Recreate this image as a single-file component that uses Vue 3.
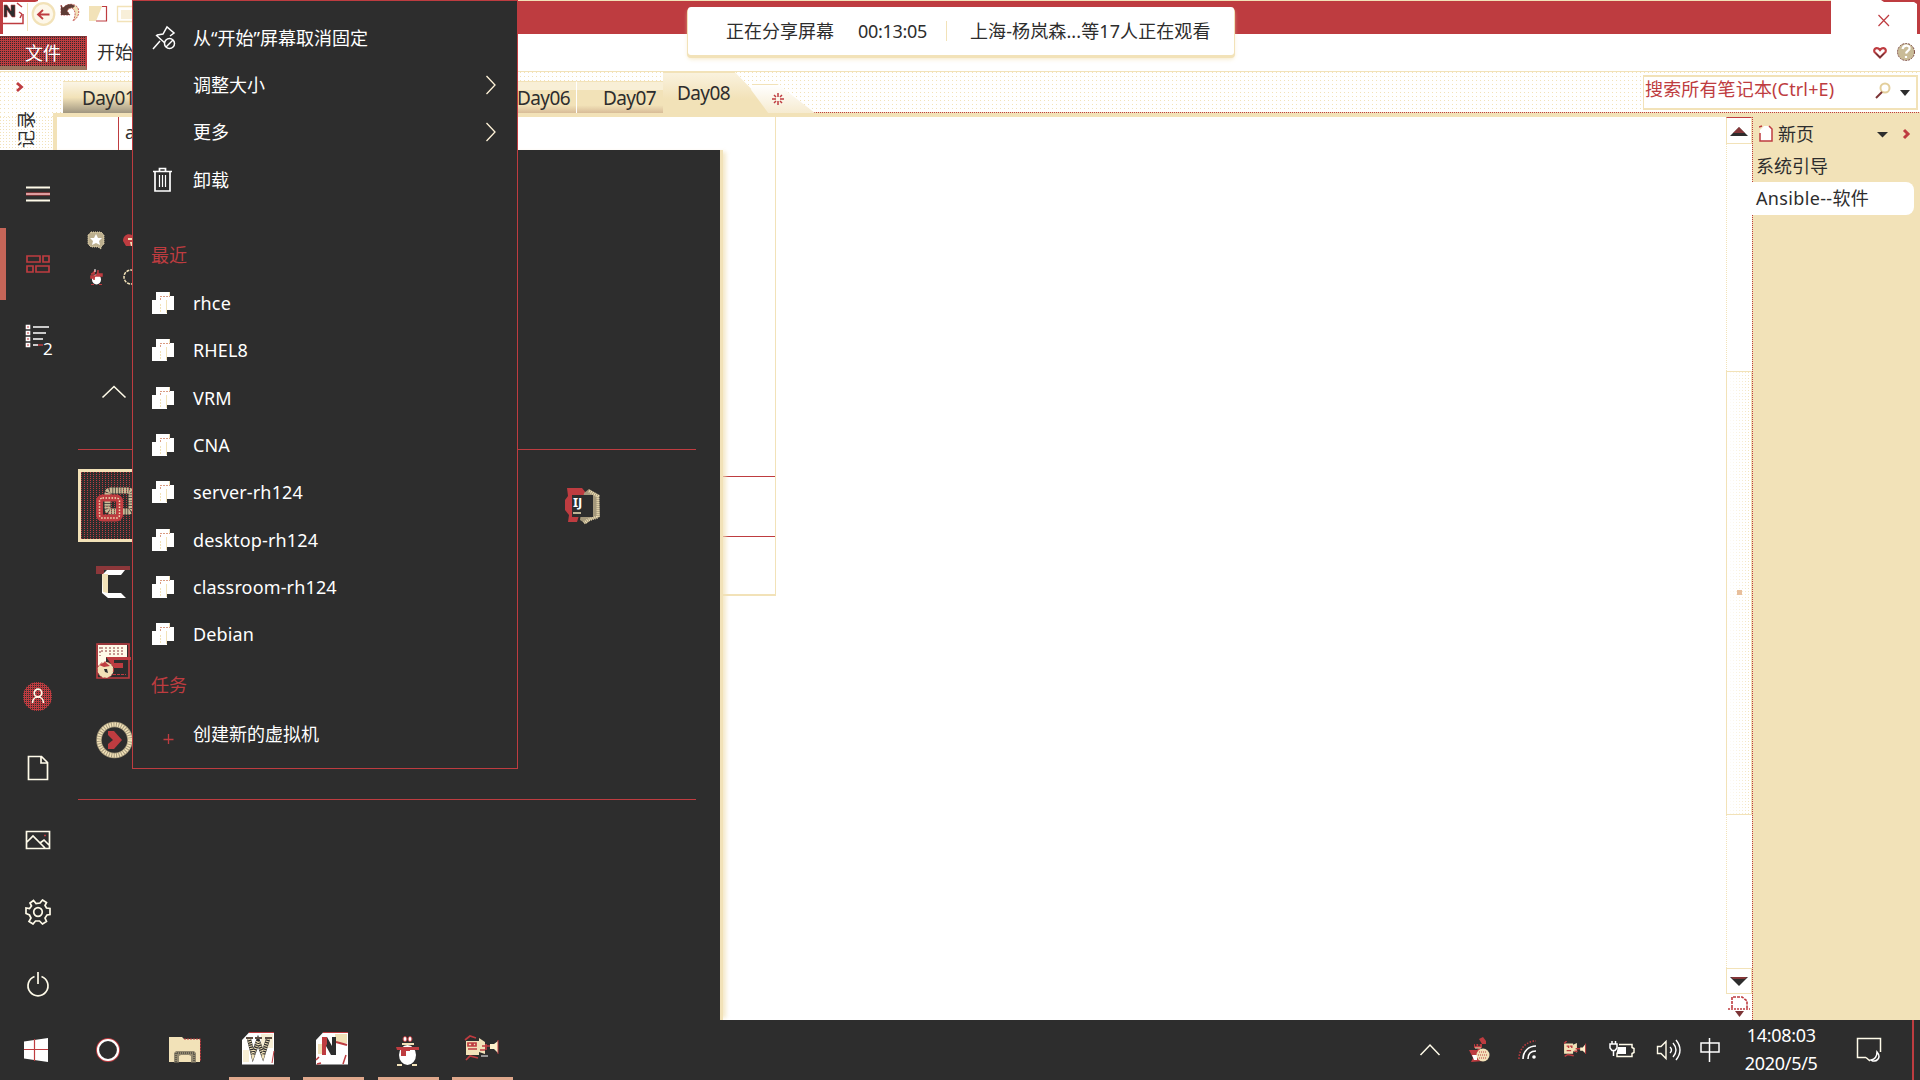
<script setup>
const recent = ['rhce', 'RHEL8', 'VRM', 'CNA', 'server-rh124', 'desktop-rh124', 'classroom-rh124', 'Debian']
</script>

<template>
  <div class="desktop">
    <!-- Notebook window -->
    <main class="window">
      <header class="title">
        <div class="quick">
          <svg width="136" height="34" viewBox="3 0 136 34">
            <path d="M3 0h35v1l-3 1H3z" fill="#be3c40" />
            <path d="M3 23.500h20V14" stroke="#be3c40" fill="none" stroke-width="1.500" />
            <path d="M17 3l5 4M19 12l3 2M20 18l2-4" stroke="#be3c40" fill="none" stroke-width="1.500" />
            <path d="M4 17V5h3l4 6V5h4v12h-3L7 10v7z" fill="#2d2d2d" stroke="#be3c40" stroke-width=".6" />
            <path d="M27.500 3v28" stroke="#f2e2b8" />
            <circle cx="43.500" cy="14" r="10.800" stroke="#f2e2b8" stroke-width="2.200" fill="#fdf7e9" />
            <path d="M49.500 14.500H38.500M43 10l-5 4.500 5 4.500" stroke="#be3c40" fill="none" stroke-width="1.800" />
            <path d="M61 5l2 3c4-5 12-5 15 0 2 5 0 10-5 13 2-4 3-8 1-11-2-3-5-2-7 1l3 4h-9z" fill="#f2e2b8" stroke="#be3c40" stroke-width=".8" stroke-dasharray="2 1" />
            <path d="M61 5l2 3c3-4 8-5 12-2l-2 2c-2-1-5 0-6 3l3 4h-9z" fill="#5f3c36" />
            <path d="M89 6h13v15H89z" fill="#f2e2b8" />
            <path d="M102 6.500h4.500V21H96" stroke="#be3c40" fill="#fff" stroke-width="1.200" />
            <path d="M139 6.500h-21.500v15H139" stroke="#f2e2b8" fill="none" stroke-width="1.300" />
            <path d="M121 10h11v9h-11z" fill="#f8efd9" />
          </svg>
        </div>
        <div class="title-fill"></div>
        <div class="controls">
          <svg width="89" height="34" viewBox="0 0 89 34">
            <path d="M50 0h39v34h-3V4l-3-2H53z" fill="#be3c40" />
            <path d="M47.500 15l10.500 11M58 15L47.500 26" stroke="#be3c40" stroke-width="1.200" />
          </svg>
        </div>
      </header>

      <div class="ribbon">
        <div class="file">文件</div>
        <div class="home">开始</div>
        <svg class="helps" width="48" height="36" viewBox="0 0 48 36">
          <path d="M8 21.500L2.500 16c-1.500-4 3-5 5.500-2 2.500-3 7-2 5.500 2z" fill="#fff" stroke="#be3c40" stroke-width="2.200" />
          <path d="M4 17.500l4 4 4-4" stroke="#2d2d2d" fill="none" />
          <circle cx="34" cy="16" r="8.500" fill="#c9bb97" stroke="#7c4a42" stroke-dasharray="2 1" />
          <path d="M30.500 13c1-5 8-4 7 0-1 2-3 2-3.500 4.500M34 20v2" stroke="#fff" stroke-width="2.200" fill="none" />
        </svg>
      </div>

      <div class="tabs">
        <svg class="expand" width="10" height="12" viewBox="0 0 10 12"><path d="M1 2l4.500 4L1 10" stroke="#be3c40" stroke-width="2.800" fill="none" /></svg>
        <div class="tab first">Day01</div>
        <div class="tab six">Day06</div>
        <div class="tab seven">Day07</div>
        <div class="tab active"><span>Day08</span></div>
        <div class="tab add">
          <svg width="14" height="14" viewBox="-7 -7 14 14"><path d="M0-6v4M0 2v4M-6 0h4M2 0h4M-4-4l2 2M2 2l2 2M4-4L2-2M-2 2l-2 2" stroke="#be3c40" stroke-width="1.500" /></svg>
        </div>
        <div class="search">
          <span>搜索所有笔记本(Ctrl+E)</span>
          <svg width="38" height="18" viewBox="0 0 38 18">
            <circle cx="13" cy="6" r="4.500" stroke="#e3cf9c" stroke-width="2" fill="#fff" />
            <path d="M10 10l-6 6" stroke="#7c3436" stroke-width="2" />
            <path d="M28 8h10l-5 6z" fill="#2d2d2d" />
          </svg>
        </div>
      </div>

      <div class="body">
        <aside class="notebooks"><span>记录</span></aside>
        <section class="page">
          <div class="note">
            <div class="cell"><span>a</span></div>
            <div class="row r1"></div>
            <div class="row r2"></div>
          </div>
        </section>
        <div class="scroll">
          <div class="btn"><svg width="18" height="9" viewBox="0 0 18 9"><path d="M0 9L9 0l9 9z" fill="#2d2d2d" /><path d="M3 6l6-6 6 6z" fill="#be3c40" opacity=".6" /></svg></div>
          <div class="track up"></div>
          <div class="thumb"><i></i></div>
          <div class="track down"></div>
          <div class="btn low"><svg width="18" height="9" viewBox="0 0 18 9"><path d="M0 0h18L9 9z" fill="#2d2d2d" /><path d="M1 0h16l-2 2H3z" fill="#be3c40" opacity=".6" /></svg></div>
          <svg class="pagedown" width="26" height="26" viewBox="0 0 26 26">
            <path d="M6 14V3h10l5 4v7" stroke="#be3c40" stroke-width="1.600" stroke-dasharray="3 1" fill="#fff" />
            <path d="M2 15h22" stroke="#be3c40" stroke-width="1.500" stroke-dasharray="2 1" />
            <path d="M9 17h9l-4.500 6z" fill="#7c3436" />
          </svg>
        </div>
        <aside class="pages">
          <div class="pg new">
            <svg width="14" height="18" viewBox="0 0 14 18"><path d="M1 5l4-4h5l3 3v12H1z" fill="#fff" /><path d="M1 8v8h12V4l-3-3M0 2l3-1" stroke="#be3c40" stroke-width="1.500" fill="none" /></svg>
            <span>新页</span>
            <svg class="newctl" width="34" height="12" viewBox="0 0 34 12"><path d="M0 4h11l-5.500 5.500z" fill="#2d2d2d" /><path d="M27 2l4 4-4 4" stroke="#be3c40" stroke-width="3" fill="none" /></svg>
          </div>
          <div class="pg">系统引导</div>
          <div class="pg sel">Ansible--软件</div>
        </aside>
      </div>
    </main>

    <!-- Start menu -->
    <section class="start">
      <nav class="rail">
        <div class="ri burger"><svg width="24" height="16" viewBox="0 0 24 16"><path d="M0 1.500h24M0 14.500h24" stroke="#fffbe9" stroke-width="2" /><path d="M0 8h24" stroke="#be3c40" stroke-width="3" /><path d="M0 8h24" stroke="#fff" /></svg></div>
        <div class="ri on"><svg width="24" height="18" viewBox="0 0 24 18"><path d="M1 1h13v6H1zM17 1h6v6h-6zM1 11h6v6H1zM10 11h13v6H10z" stroke="#be3c40" stroke-width="1.700" fill="none" /></svg></div>
        <div class="ri">
          <svg class="list" width="32" height="36" viewBox="0 0 32 36">
            <path d="M1.500 1.500h3v3h-3zM1.500 7.500h3v3h-3zM1.500 13.500h3v3h-3zM1.500 19.500h3v3h-3z" stroke="#fff" stroke-width="1.600" fill="#be3c40" />
            <path d="M8 3h16M8 9h13M8 15h10M8 21h5" stroke="#fff" stroke-width="1.600" /><path d="M13 21h5" stroke="#be3c40" stroke-width="1.500" />
            <text x="18" y="30.500" font-size="17" fill="#fff">2</text>
          </svg>
        </div>
        <div class="gap"></div>
        <div class="ri"><div class="user"><svg width="14" height="16" viewBox="0 0 14 16"><circle cx="7" cy="5" r="3.800" /><path d="M1.500 15c0-8 11-8 11 0" /></svg></div></div>
        <div class="ri"><svg class="ln" width="22" height="26" viewBox="0 0 22 26"><path d="M1.500 1.500h13l6 6v17h-19zM14 1.500v6.500h6" /></svg></div>
        <div class="ri"><svg class="ln" width="26" height="20" viewBox="0 0 26 20"><path d="M1.500 1.500h23v17h-23zM2 12l6-6 12 12M15 13l4-3 5 5" /><path class="sun" d="M19 5.500h2" /></svg></div>
        <div class="ri"><svg class="ln" width="26" height="26" viewBox="-13 -13 26 26"><circle r="4.300" /><path d="M-2-8.500L-4.500-11.500-8-9-6.500-6-8.500-3.500-12-4V1.500L-8.500 3-7 6-9 9.500-5 12-2.500 9H1.500L4.500 12 8.500 9.500 7 6 9 3 12 2.500V-3.500L8.500-4 7-6.500 8.500-9.500 4.500-12 2-9z" /></svg></div>
        <div class="ri"><svg class="ln" width="24" height="26" viewBox="0 0 24 26"><path d="M8.500 5.500a10 10 0 1 0 7 0M12 1v12" /></svg></div>
      </nav>

      <div class="tiles">
        <div class="folder">
          <svg width="20" height="20" viewBox="0 0 20 20"><path d="M5 2h10l3 3v9l-3 3v2l-3-2H5l-3-3V5z" fill="#bdb08f" stroke="#f2e2b8" stroke-dasharray="1 1" /><path d="M10 4l2 4h4l-3 3 1 4-4-2-4 2 1-4-3-3h4z" fill="#fff" /></svg>
          <svg width="20" height="20" viewBox="0 0 20 20"><path d="M1 11c0-6 5-8 9-6v11H4z" fill="#be3c40" /><path d="M6 8h5v2H6zM8 12h4v4H9z" fill="#f2e2b8" /></svg>
          <svg width="20" height="20" viewBox="0 0 20 20"><ellipse cx="10.500" cy="12.500" rx="4.500" ry="5" fill="#fff" /><path d="M5 7l3 0 1-4M12 3v4h4v2H5v2h3v2" fill="#be3c40" stroke="#be3c40" stroke-width="1.500" /><path d="M9 2v3" stroke="#fff" /><path d="M5 17.500h3M13 17.500h3" stroke="#be3c40" /></svg>
          <svg width="20" height="20" viewBox="0 0 20 20"><circle cx="9" cy="10" r="7" fill="none" stroke="#f2e2b8" stroke-width="1.500" stroke-dasharray="3 1" /></svg>
        </div>
        <svg class="collapse" width="26" height="14" viewBox="0 0 26 14"><path d="M1.500 12.500L13 1.500l11.500 11" fill="none" stroke="#fffbe9" stroke-width="1.600" /></svg>
        <div class="group">
          <div class="tile hot"><svg width="40" height="40" viewBox="0 0 40 40">
            <rect x="11.500" y="4.500" width="24" height="21" rx="3" fill="none" stroke="#c9bb97" stroke-width="6" stroke-dasharray="2 .7" />
            <rect x="3.500" y="12" width="20" height="20" rx="3" fill="none" stroke="#be3c40" stroke-width="7" />
            <rect x="3.500" y="12" width="20" height="20" rx="3" fill="none" stroke="#f2e2b8" stroke-width="1.500" stroke-dasharray="1.500 1.500" />
          </svg></div>
          <div class="tile ij"><svg width="38" height="38" viewBox="0 0 38 38">
            <path d="M3 1h15l4 5-9 29H4l1-7-4-5V13l3-4z" fill="#be3c40" /><path d="M20 6l5-4 10 6 1 22-9 3-5 4-6-4" fill="#a5997c" /><path d="M8 8h21v22H8z" fill="#2d2d2d" />
            <path d="M25 4l9 5v21l-10 3-4 3" fill="none" stroke="#f2e2b8" stroke-width="3" stroke-dasharray="1 1" /><path d="M9 26h8" stroke="#f2e2b8" stroke-width="1.500" />
            <text x="9" y="20" font-size="13" font-weight="700" fill="#fff">IJ</text>
          </svg></div>
          <div class="tile"><svg width="36" height="36" viewBox="0 0 36 36"><path d="M0 2h34v4H8v4H0z" fill="#8c373a" /><path d="M11 6h18l-4 5H12v18h13l5 5H12l-6-5V11z" fill="#fff" /><path d="M6 10h6v19l-5-1z" fill="#f2e2b8" /></svg></div>
          <div class="tile"><svg width="36" height="36" viewBox="0 0 36 36"><path d="M1 1h32v34H1z" fill="#2d2d2d" stroke="#be3c40" stroke-width="1.600" /><path d="M2 2h29v12H10v10H2z" fill="#fffbe9" /><path d="M5 5h23M5 8h23M13 11h15M4 4v9" stroke="#8c373a" stroke-dasharray="2 2" /><path d="M10 14h25v3H18v3h9v5h-9z" fill="#be3c40" /><path d="M17 31.500h13" stroke="#be3c40" stroke-dasharray="3 1" /><circle cx="9.500" cy="27" r="8" fill="#f2e2b8" stroke="#be3c40" stroke-dasharray="2 2" /><path d="M3 22l6-3 5 4-6 1z" fill="#be3c40" /><path d="M8 26h3l1 4-3-1z" fill="#2d2d2d" /></svg></div>
          <div class="tile"><svg width="38" height="38" viewBox="-19 -19 38 38"><circle cx="-.5" r="15.500" fill="none" stroke="#a5997c" stroke-width="5.500" /><circle cx="-.5" r="15.500" fill="none" stroke="#f2e2b8" stroke-width="4" stroke-dasharray="1.500 1" /><path d="M-7-9h6L7 0-1 9h-6V4l5-4-5-5z" fill="#be3c40" /></svg></div>
        </div>
      </div>
    </section>

    <!-- Jump list -->
    <section class="menu">
      <div class="mi m1">
        <svg width="24" height="26" viewBox="0 0 24 26"><path d="M1 24l7-8M4 10l10 9M5 10l6-1 4-7 7 6-4 3" stroke="#fff" stroke-width="1.500" fill="none" /><circle cx="17.500" cy="18.500" r="5" stroke="#fff" stroke-width="1.500" fill="#2d2d2d" /><path d="M14 22l7-7" stroke="#fff" stroke-width="1.500" /></svg>
        <span>从“开始”屏幕取消固定</span>
      </div>
      <div class="mi m2"><b></b><span>调整大小</span><svg class="arr" width="12" height="20" viewBox="0 0 12 20"><path d="M1.500 1l8.500 9-8.500 9" fill="none" stroke="#fff3d8" stroke-width="1.300" /></svg></div>
      <div class="mi m2"><b></b><span>更多</span><svg class="arr" width="12" height="20" viewBox="0 0 12 20"><path d="M1.500 1l8.500 9-8.500 9" fill="none" stroke="#fff3d8" stroke-width="1.300" /></svg></div>
      <div class="mi m2">
        <svg width="24" height="26" viewBox="0 0 24 26"><path d="M1 4.500h19M7.500 4V1.500h6V4M3 5v19h15V5" stroke="#fff" stroke-width="1.700" fill="none" /><path d="M7.500 8v12M10.500 8v12M13.500 8v12" stroke="#fff" stroke-width="1.200" /></svg>
        <span>卸载</span>
      </div>
      <h3 class="h1">最近</h3>
      <div v-for="name in recent" :key="name" class="mi lat">
        <svg width="24" height="24" viewBox="0 0 24 24" shape-rendering="crispEdges"><path d="M4 1h14v8H4z" fill="#fff" /><path d="M8 5h14v14H8z" fill="#fff" /><path d="M8.500 9V5.500H18" stroke="#d99b82" fill="none" stroke-dasharray="2 1" /><path d="M0 9h15v14H0z" fill="#fff" /><path d="M14.500 9v13M17.500 1v4" stroke="#f2e2b8" /><path d="M8.500 13v9" stroke="#f2e2b8" stroke-dasharray="2 1" /></svg>
        <span>{{ name }}</span>
      </div>
      <h3 class="h2">任务</h3>
      <div class="mi task">
        <svg width="24" height="24" viewBox="0 0 24 24"><path d="M16.500 10v10M11.500 15.500h10" stroke="#be3c40" stroke-width="1.300" /></svg>
        <span>创建新的虚拟机</span>
      </div>
    </section>

    <!-- Sharing banner -->
    <div class="share">
      <span class="s1">正在分享屏幕</span><span class="s2">00:13:05</span><i></i><span class="s3">上海-杨岚森...等17人正在观看</span>
    </div>

    <!-- Taskbar -->
    <footer class="taskbar">
      <div class="tb w0"><svg width="24" height="24" viewBox="0 0 24 24"><path d="M0 3.500L24 0v24L0 20.500z" fill="#fff" /><path d="M10.500 1v22M0 11.500h24" stroke="#be3c40" stroke-width="1.200" /></svg></div>
      <div class="tb w1"><svg width="26" height="26" viewBox="-13 -13 26 26"><circle r="11" fill="none" stroke="#be3c40" stroke-width="2" /><circle r="10" fill="none" stroke="#fff" stroke-width="2.200" /></svg></div>
      <div class="tb w2"><svg width="32" height="28" viewBox="0 0 32 28"><path d="M0 1h13l2 2h16v23H0z" fill="#f2e2b8" /><path d="M15 3h16.500v22" stroke="#be3c40" fill="none" stroke-dasharray="2 1" /><path d="M5 26.500V17l2-2h18l2 2v9.500h-5V20l-2-1h-8l-2 1v6.500z" fill="#938970" /><path d="M7 26V17h18v9" stroke="#2d2d2d" stroke-dasharray="1 1" fill="none" /></svg></div>
      <div class="tb run"><svg width="34" height="34" viewBox="0 0 34 34"><path d="M8 .5h25v32H1V8z" fill="#fff" /><path d="M8 .5h25M33 19l-2 12" stroke="#be3c40" /><path d="M20 2h12v14H20zM2 18h6v12H2z" fill="#f2e2b8" opacity=".6" /><path d="M8 7l4 16 5-14 5 14 5-16" fill="none" stroke="#2d2d2d" stroke-width="4.200" /><path d="M8 7l4 16 5-14 5 14 5-16" fill="none" stroke="#f2e2b8" stroke-width="3.500" stroke-dasharray="1 1.300" /><path d="M5 6h7M14 6h7M24 6h7" stroke="#5d4c42" stroke-width="1.800" /></svg></div>
      <div class="tb run"><svg width="34" height="34" viewBox="0 0 34 34"><path d="M8 .5h25v32H1V8z" fill="#fff" /><path d="M8 .5h25" stroke="#be3c40" /><path d="M20 2h12v9H20zM3 12h4v10H3z" fill="#f2e2b8" /><path d="M21 10l11 3" stroke="#be3c40" stroke-width="2" /><path d="M1 28l3-3M2 32l4-1M31 23l-3 9" stroke="#be3c40" stroke-width="1.500" /><path d="M7 5h5l5 9V5h4v18h-5l-5-9v9H7z" fill="#2d2d2d" /><path d="M7 5h5v7l-1 2v9H7z" fill="#be3c40" /></svg></div>
      <div class="tb run qq"><svg width="26" height="32" viewBox="0 0 26 32"><ellipse cx="12.500" cy="20" rx="8.500" ry="10" fill="#fff" /><ellipse cx="10" cy="4" rx="2" ry="2.500" fill="#fff" stroke="#be3c40" /><ellipse cx="15" cy="4" rx="2" ry="2.500" fill="#fff" stroke="#be3c40" /><path d="M7 9h12" stroke="#f2e2b8" stroke-width="2" /><path d="M1 12h23v3h-9v1h-4v5H6v-6H2z" fill="#be3c40" /><path d="M2 30h5M17 30h5" stroke="#f2e2b8" stroke-width="2" /></svg></div>
      <div class="tb run camr"><svg width="36" height="28" viewBox="0 0 36 28"><path d="M2 6h13v14H2zM15 3l6 4v12l-6-2z" fill="#f2e2b8" /><path d="M1 5l5-4 6 2M4 8h4v3H4zM9 8h3v3H9zM4 14h9M2 25l4-4 8 2M18 11h8M22 9v6M16 15h5" stroke="#be3c40" stroke-width="1.700" fill="none" /><path d="M26 9h4l4-3v12l-4-4h-4z" fill="#fff1cc" /><path d="M34 5v14" stroke="#be3c40" /><path d="M17 21h7" stroke="#fff" /></svg></div>

      <div class="tray">
        <svg class="t1" width="22" height="14" viewBox="0 0 22 14"><path d="M1.500 12L11 2l9.500 10" stroke="#fffbe9" stroke-width="1.500" fill="none" /></svg>
        <svg class="t2" width="22" height="26" viewBox="0 0 22 26"><path d="M0 13l8 0 2-2 4 3v10l-12 1 2-4zM10 2l4-2 3 4v3h-4zM5 7h8v4H5z" fill="#be3c40" /><path d="M3 18h5v5H5z" fill="#fff" /><circle cx="14" cy="18" r="6.500" fill="#f2e2b8" /><path d="M10 15h8M9 18h10M10 21h8" stroke="#be3c40" stroke-dasharray="1 1" /><path d="M6 5l1 4M10 5v4" stroke="#2d2d2d" stroke-width="1.500" /><path d="M6 11h6" stroke="#f2e2b8" /></svg>
        <svg class="t3" width="20" height="20" viewBox="0 0 20 20"><path d="M1 19C1 8 9 1 18 1" stroke="#be3c40" stroke-dasharray="1.500 1.500" stroke-width="1.500" fill="none" /><path d="M5 19c0-8 6-13 13-13M10 19c0-5 3-8 8-8" stroke="#fff" stroke-width="1.600" fill="none" /><circle cx="16" cy="17" r="1.800" fill="#fff" /></svg>
        <svg class="t4" width="24" height="18" viewBox="0 0 36 28"><path d="M1 4h14v16H1zM15 6l6-3v15l-6-2z" fill="#f2e2b8" /><path d="M1 4l4-4M5 8h3v3M10 8h3v3M5 15h7M2 24l5-3 9 2M19 12h7M17 16h5" stroke="#be3c40" stroke-width="2.200" fill="none" /><path d="M26 10h4l4-5v14l-4-4h-4z" fill="#fff1cc" /><path d="M34.500 4v16" stroke="#be3c40" stroke-width="1.500" /></svg>
        <svg class="t5" width="26" height="20" viewBox="0 0 26 20"><path d="M10 4.500h13v3l2 1v4l-2 1v3H8v-4" stroke="#fffbe9" stroke-width="1.500" fill="none" /><path d="M9 7h8v7H8v-3z" fill="#fff" /><path d="M1 4h7v4l-2 2.500H3L1 8zM3 4V1M6.500 4V1M4.500 11v5" stroke="#fff" stroke-width="1.500" fill="#2d2d2d" /></svg>
        <svg class="t6" width="26" height="24" viewBox="0 0 26 24"><path d="M1.500 8.500H5l5-5v17l-5-5H1.500z" stroke="#fffbe9" stroke-width="1.400" fill="none" /><path d="M14 9q3 3 0 6M17 5q6 7 0 14M20 2q8 10 0 20" stroke="#fff" stroke-width="1.400" fill="none" /></svg>
        <svg class="t7" width="20" height="24" viewBox="0 0 20 24"><path d="M1 5h18v9H1zM9.500 0v24" stroke="#fff" stroke-width="1.500" fill="none" /></svg>
        <div class="clock"><div>14:08:03</div><div class="date">2020/5/5</div></div>
        <svg class="t8" width="26" height="26" viewBox="0 0 26 26"><path d="M10 20.500H1.500v-19h23V15M10 20.500l4 3.500" stroke="#fffbe9" stroke-width="1.500" fill="none" /><path d="M21 15c5 6-1 11-6 8 5-1 6-4 6-8z" stroke="#fff" stroke-width="1.500" fill="none" /></svg>
        <div class="peek"></div>
      </div>
    </footer>
  </div>
</template>

<style>
body { margin: 0; overflow: hidden; background: #2d2d2d; }
</style>

<style scoped>
* { box-sizing: border-box; }
.desktop {
  --ink: #2d2d2d; --red: #be3c40; --sand: #f2e2b8;
  position: relative; width: 1920px; height: 1080px; overflow: hidden;
  display: flex; flex-direction: column; background: var(--ink); color: var(--ink);
  font-family: "Noto Sans", "Noto Sans CJK SC", sans-serif; font-size: 18px; line-height: 24px; white-space: nowrap;
}
svg { display: block; flex: none; }
.window { height: 1020px; display: flex; flex-direction: column; background: #fff; }

.title { display: flex; height: 34px; background: #fff; }
.quick { width: 139px; border-left: 3px solid var(--red); }
.title-fill { flex: 1; background: var(--red); border-top: 1px solid var(--sand); }
.controls { width: 89px; }

.ribbon { display: flex; height: 38px; padding-top: 2px; border-bottom: 1px solid var(--sand); }
.file {
  width: 87px; height: 34px; padding-left: 25px; line-height: 32px; color: #fff;
  border-top: 1px solid #7b3436; border-right: 1px solid var(--red); border-bottom: 4px solid #9d7660;
  background: conic-gradient(from 270deg at 1px 1px, #2d2d2d 90deg, transparent 0) 0 0 / 2px 2px, var(--red);
}
.home { margin-left: 10px; line-height: 33px; }
.helps { margin-left: auto; }

.tabs {
  display: flex; align-items: flex-end; height: 45px; padding-bottom: 4px;
  background:
    linear-gradient(var(--sand), var(--sand)) 53px 100% / 1867px 4px no-repeat,
    repeating-linear-gradient(90deg, var(--red) 0 1px, var(--sand) 1px 2px) 700px 40px / 1220px 1px no-repeat,
    conic-gradient(from 270deg at 1px 1px, var(--sand) 90deg, transparent 0) 0 0 / 4px 4px, #fff;
}
.expand { margin: 0 0 20px 16px; }
.tab { height: 32px; line-height: 32px; font-size: 19px; letter-spacing: -.6px; border-top: 1px solid var(--sand); background: linear-gradient(#f8efd6 0 25%, var(--sand) 25% 75%, #d8bc98); }
.first { width: 442px; margin-left: 37px; padding-left: 19px; background: linear-gradient(#fbf5e5, var(--sand) 50%, #a09680); }
.six { width: 74px; margin-left: -3px; padding-left: 15px; }
.seven { width: 87px; padding-left: 26px; border-left: 1px solid #fff; }
.active { width: 112px; height: 41px; padding-left: 14px; line-height: 41px; clip-path: polygon(0 0, 64% 0, 100% 100%, 0 100%); background: linear-gradient(#faf2de, var(--sand) 65%); }
.add { width: 78px; height: 29px; margin-left: -38px; padding: 7px 0 0 34px; background: linear-gradient(#fff, #f6ebd0); clip-path: polygon(20% 0, 52% 0, 100% 100%, 40% 100%, 18% 20%); }
.search { display: flex; justify-content: space-between; width: 275px; height: 35px; margin: 0 2px 3px auto; padding: 0 6px 0 1px; border: 2px solid var(--sand); border-left-width: 1px; background: #fff; color: var(--red); line-height: 25px; }
.search svg { margin-top: 5px; }
.search span { letter-spacing: .15px; }

.body { flex: 1; display: flex; min-height: 0; }
.notebooks {
  width: 57px; border-right: 4px solid var(--sand); padding-left: 14px;
  background: conic-gradient(from 270deg at 1px 1px, var(--sand) 90deg, transparent 0) 0 0 / 3px 3px, #fff;
}
.notebooks span { display: block; width: 24px; writing-mode: vertical-rl; text-orientation: sideways; transform: rotate(180deg); letter-spacing: 1px; margin-top: -7px; }
.page { flex: 1; background: #fff; }
.note { width: 719px; height: 479px; border-right: 1px solid var(--sand); border-bottom: 2px solid var(--sand); }
.cell { height: 360px; margin-left: 61px; border-left: 1px solid var(--red); border-bottom: 1px solid var(--red); padding: 3px 0 0 6px; }
.row { margin-left: 61px; }
.r1 { height: 60px; border-bottom: 1px solid var(--red); }
.r2 { height: 57px; }

.scroll { width: 26px; display: flex; flex-direction: column; }
.btn { height: 27px; padding: 9px 0 0 3px; border: 1px solid var(--sand); border-top-color: var(--red); }
.btn.low { height: 26px; padding-top: 8px; border-top-color: var(--sand); }
.track { border-left: 1px dotted var(--sand); }
.up { height: 227px; }
.thumb {
  height: 444px; border: 1px solid var(--sand); padding: 218px 0 0 10px;
  background: linear-gradient(90deg, #fff, transparent), conic-gradient(from 270deg at 1px 1px, var(--sand) 90deg, transparent 0) 0 0 / 3px 3px, #fff;
}
.thumb i { display: block; width: 5px; height: 5px; background: #e8bf9c; }
.down { flex: 1; }

.pages { width: 168px; background: var(--sand); border-left: 1px dotted var(--red); }
.pg { height: 32px; line-height: 32px; padding-left: 3px; }
.new { display: flex; align-items: center; padding-left: 6px; height: 33px; }
.new span { margin-left: 5px; }
.newctl { margin: 0 9px 0 auto; }
.sel { width: 162px; height: 33px; line-height: 33px; margin-left: -1px; padding-left: 4px; background: #fff; border-radius: 0 8px 8px 0; letter-spacing: .35px; }

.start {
  position: absolute; left: 0; top: 150px; width: 720px; height: 870px; display: flex; background: var(--ink);
  box-shadow: 3px 0 0 var(--sand), 8px 0 4px -2px rgba(242, 226, 184, .75);
}
.rail { width: 78px; display: flex; flex-direction: column; padding-top: 6px; }
.ri { height: 72px; padding-right: 3px; display: flex; align-items: center; justify-content: center; }
.burger { padding-top: 3px; }
.on { border-left: 6px solid #c56558; padding-right: 8px; }
.list { margin: 12px 0 0 7px; }
.gap { flex: 1; }
.ln path, .ln circle, .user svg * { fill: none; stroke: #fffbe9; stroke-width: 1.700; }
.ln .sun { stroke: var(--red); }
.user { width: 29px; height: 29px; border-radius: 50%; display: flex; align-items: center; justify-content: center; background: conic-gradient(from 270deg at 1px 1px, var(--ink) 90deg, transparent 0) 0 0 / 2px 2px, var(--red); }
.tiles { width: 618px; }
.folder { display: grid; grid-template-columns: 20px 20px; gap: 17px 16px; padding: 80px 0 0 8px; }
.collapse { margin: 98px 0 0 23px; }
.group { margin-top: 50px; height: 351px; border-top: 1px solid var(--red); border-bottom: 1px solid var(--red); display: grid; grid-template-columns: 468px 72px; grid-template-rows: 73px 79px 79px 79px; align-content: start; padding-top: 19px; }
.tile { width: 72px; padding-left: 18px; display: flex; align-items: center; }
.tile:nth-child(n + 3) { grid-column: 1; }
.hot { border: 3px solid var(--sand); padding: 0 0 0 15px; background: conic-gradient(from 270deg at 1px 1px, var(--red) 90deg, transparent 0) 0 0 / 3px 2px, var(--ink); }

.menu { position: absolute; left: 132px; top: 0; width: 386px; height: 769px; border: 1px solid var(--red); background: var(--ink); color: #fff; padding: 13px 0 0 19px; }
.mi { display: flex; align-items: center; height: 47.400px; }
.mi span { margin-left: 17px; }
.mi b { width: 24px; }
.arr { margin: 0 20px 0 auto; }
.menu h3 { margin: 0 0 0 -1px; font-weight: 400; font-size: 18px; color: var(--red); height: 24px; }
.menu .h1 { margin-top: 39px; margin-bottom: 12.500px; }
.menu .h2 { margin-top: 15px; margin-bottom: 13px; }
.lat { letter-spacing: .15px; }
.task svg { margin-top: 4px; }

.share {
  position: absolute; left: 688px; top: 7px; width: 546px; height: 48px; display: flex; align-items: center; padding-left: 38px;
  background: #fff; border-radius: 3px; box-shadow: 0 2px 0 1px var(--sand), 0 4px 4px rgba(242, 226, 184, .8);
}
.s1 { width: 132px; } .s2 { width: 88px; letter-spacing: -.3px; }
.s3 { letter-spacing: .1px; }
.share i { width: 1px; height: 20px; background: var(--sand); margin-right: 23px; }

.taskbar { position: relative; height: 60px; display: flex; background: var(--ink); color: #fff; }
.tb { width: 62px; height: 60px; margin-right: 12px; display: flex; align-items: center; justify-content: center; }
.w0 { width: 72px; margin: 0; } .w1 { width: 72px; margin: 0; } .w2 { width: 82px; margin-right: 3px; }
.run { width: 61px; margin-right: 13.300px; padding: 0 3px 0 0; border-bottom: 3px solid #dfa88c; }
.qq { padding: 4px 0 0; }
.camr { padding: 0; }
.tray { flex: 1; display: flex; align-items: center; }
.t1 { margin-left: 893px; } .t2 { margin-left: 28px; } .t3 { margin-left: 27px; } .t4 { margin-left: 25px; } .t5 { margin-left: 22px; } .t6 { margin-left: 21px; } .t7 { margin-left: 18px; }
.clock { width: 82px; margin-left: 20px; text-align: center; line-height: 28px; letter-spacing: -.3px; padding-bottom: 2px; }
.t8 { margin-left: 34px; }
.peek { width: 2px; height: 60px; margin-left: auto; margin-right: 6px; background: var(--red); }
</style>
